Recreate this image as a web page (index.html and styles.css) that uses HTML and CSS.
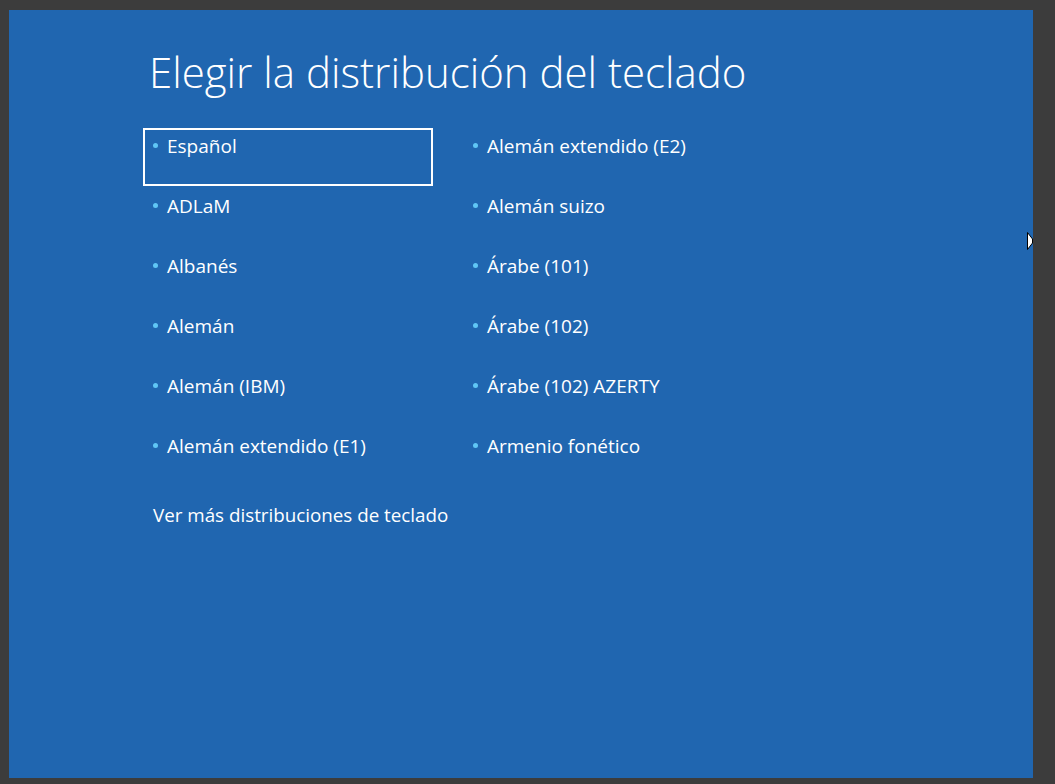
FILE: index.html
```html
<!DOCTYPE html>
<html lang="es">
<head>
<meta charset="utf-8">
<title>Elegir la distribución del teclado</title>
<link rel="stylesheet" href="styles.css">
</head>
<body>
<div class="screen">
  <h1 class="title">Elegir la distribución del teclado</h1>
  <div class="layouts">
    <div class="item focused"><span class="dot"></span><span class="label">Español</span></div>
    <div class="item"><span class="dot"></span><span class="label">Alemán extendido (E2)</span></div>
    <div class="item"><span class="dot"></span><span class="label">ADLaM</span></div>
    <div class="item"><span class="dot"></span><span class="label">Alemán suizo</span></div>
    <div class="item"><span class="dot"></span><span class="label">Albanés</span></div>
    <div class="item"><span class="dot"></span><span class="label">Árabe (101)</span></div>
    <div class="item"><span class="dot"></span><span class="label">Alemán</span></div>
    <div class="item"><span class="dot"></span><span class="label">Árabe (102)</span></div>
    <div class="item"><span class="dot"></span><span class="label">Alemán (IBM)</span></div>
    <div class="item"><span class="dot"></span><span class="label">Árabe (102) AZERTY</span></div>
    <div class="item"><span class="dot"></span><span class="label">Alemán extendido (E1)</span></div>
    <div class="item"><span class="dot"></span><span class="label">Armenio fonético</span></div>
  </div>
  <div class="more">Ver más distribuciones de teclado</div>
  <svg class="cursor" width="6" height="18" viewBox="0 0 6 18"><path d="M0.5 0.5 L5.5 7 L5.5 11 L0.5 17.5 Z" fill="#fff" stroke="#000" stroke-width="1"/></svg>
</div>
</body>
</html>
```
FILE: styles.css
```css
html, body {
  margin: 0;
  padding: 0;
  background: #3c3c3c;
  width: 1055px;
  height: 784px;
  overflow: hidden;
}
.screen {
  position: relative;
  margin: 10px 0 0 9px;
  width: 1024px;
  height: 768px;
  background: #2066b0;
  color: #fff;
  font-family: "Open Sans", "Noto Sans", sans-serif;
  box-sizing: border-box;
  padding: 34px 0 0 134px;
}
.title {
  margin: 0 0 0 6px;
  font-weight: 300;
  font-size: 42px;
  line-height: 56px;
  letter-spacing: 0;
}
.layouts {
  margin-top: 28px;
  display: grid;
  grid-template-columns: 290px 290px;
  column-gap: 30px;
  row-gap: 2px;
}
.item {
  height: 58px;
  box-sizing: border-box;
  border: 2px solid transparent;
  padding: 3px 0 0 8px;
  display: flex;
  align-items: baseline;
  font-size: 19px;
  line-height: 26px;
}
.item.focused {
  border-color: #fff;
}
.dot {
  width: 5px;
  height: 5px;
  border-radius: 50%;
  background: #5fc6f5;
  margin-right: 9px;
  transform: translateY(-5px);
  flex: none;
}
.more {
  margin: 16px 0 0 10px;
  font-size: 18.8px;
  line-height: 26px;
}
.cursor {
  position: absolute;
  right: 0;
  top: 222px;
}
```
